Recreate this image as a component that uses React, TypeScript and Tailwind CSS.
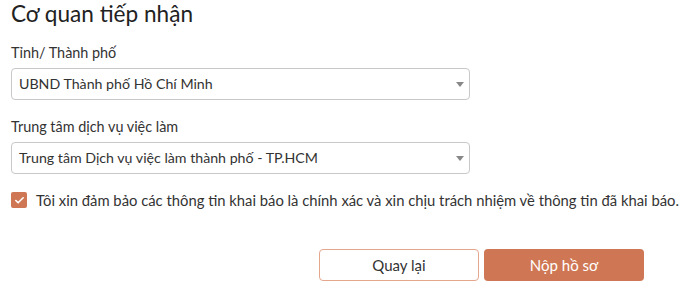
import { Check } from "lucide-react";

const Caret = () => (
  <svg width="8" height="5" viewBox="0 0 8 5" className="shrink-0">
    <path d="M0 0 L8 0 L4 5 Z" fill="#888" />
  </svg>
);

const SelectBox = ({ value }: { value: string }) => (
  <div className="mt-[5px] flex h-[32px] w-[459px] items-center justify-between rounded-[4px] border border-[#c8c8c8] bg-white pl-[7px] pr-[5px] text-[14.2px] text-[#333]">
    <span>{value}</span>
    <Caret />
  </div>
);

const App = () => {
  return (
    <div
      className="h-[291px] w-[684px] bg-white px-[11px] text-[#333]"
      style={{ fontFamily: "Lato, 'Noto Sans', sans-serif" }}
    >
      <h2 className="text-[22.6px] leading-[28px] font-normal text-[#222]">
        Cơ quan tiếp nhận
      </h2>

      <div className="mt-[15px] text-[14.4px] leading-[20px]">Tỉnh/ Thành phố</div>
      <SelectBox value="UBND Thành phố Hồ Chí Minh" />

      <div className="mt-[17px] text-[14.4px] leading-[20px]">
        Trung tâm dịch vụ việc làm
      </div>
      <SelectBox value="Trung tâm Dịch vụ việc làm thành phố - TP.HCM" />

      <div className="mt-[16px] flex items-center gap-[9px] text-[14.8px] leading-[20px]">
        <span className="flex h-[16px] w-[16px] shrink-0 items-center justify-center rounded-[2px] bg-[#cf7754]">
          <Check size={11} strokeWidth={3.5} className="text-white" />
        </span>
        <span className="whitespace-nowrap">
          Tôi xin đảm bảo các thông tin khai báo là chính xác và xin chịu trách nhiệm về thông tin đã khai báo.
        </span>
      </div>

      <div className="mt-[39px] flex justify-end gap-[5px] pr-[29px]">
        <button className="h-[32px] w-[160px] rounded-[4px] border border-[#e4a68d] bg-white text-[15px] text-[#333]">
          Quay lại
        </button>
        <button className="h-[32px] w-[160px] rounded-[4px] bg-[#cf7754] text-[15px] text-white">
          Nộp hồ sơ
        </button>
      </div>
    </div>
  );
};

export default App;
